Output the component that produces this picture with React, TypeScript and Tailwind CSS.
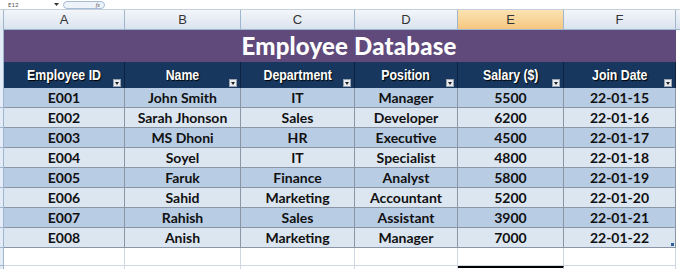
import React from 'react'

const cols = ['w-[121px]', 'w-[116px]', 'w-[114px]', 'w-[103px]', 'w-[106px]', 'w-[112px]']
const letters = ['A', 'B', 'C', 'D', 'E', 'F']
const headers = ['Employee ID', 'Name', 'Department', 'Position', 'Salary ($)', 'Join Date']

const rows = [
  ['E001', 'John Smith', 'IT', 'Manager', '5500', '22-01-15'],
  ['E002', 'Sarah Jhonson', 'Sales', 'Developer', '6200', '22-01-16'],
  ['E003', 'MS Dhoni', 'HR', 'Executive', '4500', '22-01-17'],
  ['E004', 'Soyel', 'IT', 'Specialist', '4800', '22-01-18'],
  ['E005', 'Faruk', 'Finance', 'Analyst', '5800', '22-01-19'],
  ['E006', 'Sahid', 'Marketing', 'Accountant', '5200', '22-01-20'],
  ['E007', 'Rahish', 'Sales', 'Assistant', '3900', '22-01-21'],
  ['E008', 'Anish', 'Marketing', 'Manager', '7000', '22-01-22'],
]

function FilterBtn() {
  return (
    <span className="absolute right-[3px] bottom-[1px] flex h-[8px] w-[8px] items-center justify-center border border-[#9aa3ad] bg-[#e8ebef]">
      <svg width="4" height="3" viewBox="0 0 4 3">
        <path d="M0 0H4L2 3Z" fill="#222" />
      </svg>
    </span>
  )
}

export default function App() {
  return (
    <div className="h-[269px] w-[680px] overflow-hidden bg-white" style={{ fontFamily: 'Lato, "Open Sans", sans-serif' }}>
      {/* formula bar */}
      <div className="flex h-[10px] items-center border-b border-[#c5cfdc] bg-white">
        <span className="ml-[8px] w-[46px] text-[6px] leading-none text-[#555]">E12</span>
        <svg width="5" height="3" viewBox="0 0 5 3" className="mr-[4px]">
          <path d="M0 0H5L2.5 3Z" fill="#333" />
        </svg>
        <div className="flex h-[8px] w-[42px] items-center justify-end rounded-full border border-[#a7bcd6] bg-[#eef3fa] pr-[4px]">
          <span className="text-[6px] italic leading-none text-[#555]" style={{ fontFamily: '"Liberation Serif", serif' }}>fx</span>
        </div>
      </div>

      {/* column letters */}
      <div className="flex h-[20px]">
        <div className="w-[4px] border-r border-[#9eb6ce] bg-gradient-to-b from-[#f3f6fa] to-[#dde5ef]" />
        {letters.map((l, i) => (
          <div
            key={l}
            className={`${cols[i]} flex items-center justify-center border-r border-b border-[#9eb6ce] text-[13px] text-[#333] ${
              l === 'E' ? 'bg-gradient-to-b from-[#fbe3b3] to-[#f6c77f]' : 'bg-gradient-to-b from-[#f3f6fa] to-[#dae3ee]'
            }`}
            style={{ fontFamily: '"Liberation Sans", Arial, sans-serif' }}
          >
            {l}
          </div>
        ))}
        <div className="flex-1 border-b border-[#9eb6ce] bg-gradient-to-b from-[#f3f6fa] to-[#dae3ee]" />
      </div>

      {/* title */}
      <div className="flex h-[32px]">
        <div className="w-[4px] border-r border-[#9eb6ce] bg-[#e4ecf7]" />
        <div className="flex w-[672px] items-center justify-center bg-[#604a7b] pl-[18px]">
          <span className="text-[24px] font-black leading-none tracking-[0.2px] text-white">
            Employee Database
          </span>
        </div>
        <div className="flex-1" />
      </div>

      {/* header */}
      <div className="flex h-[26px]">
        <div className="w-[4px] border-r border-[#9eb6ce] bg-[#e4ecf7]" />
        {headers.map((h, i) => (
          <div
            key={h}
            className={`${cols[i]} relative flex items-center justify-center border-r border-[#0c2240] bg-[#17375e] text-white`}
          >
            <span
              className="inline-block scale-x-[0.82] whitespace-nowrap text-[15px] font-bold"
              style={{ fontFamily: '"Liberation Sans", Arial, sans-serif', textShadow: '1px 1px 1px #000' }}
            >
              {h}
            </span>
            <FilterBtn />
          </div>
        ))}
        <div className="flex-1" />
      </div>

      {/* data */}
      {rows.map((r, ri) => (
        <div key={ri} className="flex h-[20px]">
          <div className="w-[4px] border-r border-b border-[#9eb6ce] bg-[#e4ecf7]" />
          {r.map((v, ci) => (
            <div
              key={ci}
              className={`${cols[ci]} relative flex items-center justify-center border-r border-b border-[#8a96a6] text-[14px] font-bold text-[#111] ${
                ri % 2 === 0 ? 'bg-[#b8cce4]' : 'bg-[#dce6f1]'
              }`}
            >
              {v}
              {ri === rows.length - 1 && ci === 5 && (
                <span className="absolute right-[1px] bottom-[1px] h-[3px] w-[3px] bg-[#2f5f9e]" />
              )}
            </div>
          ))}
          <div className="flex-1" />
        </div>
      ))}

      {/* empty rows */}
      <div className="flex h-[18px]">
        <div className="w-[4px] border-r border-b border-[#9eb6ce] bg-[#e4ecf7]" />
        {cols.map((c, i) => (
          <div key={i} className={`${c} border-r border-b border-[#d0d7e5]`} />
        ))}
      </div>
      <div className="flex h-[10px]">
        <div className="w-[4px] border-r border-[#9eb6ce] bg-[#e4ecf7]" />
        {cols.map((c, i) => (
          <div key={i} className={`${c} border-r border-[#d0d7e5] ${i === 4 ? 'border-t-2 border-t-black' : ''}`} />
        ))}
      </div>
    </div>
  )
}
